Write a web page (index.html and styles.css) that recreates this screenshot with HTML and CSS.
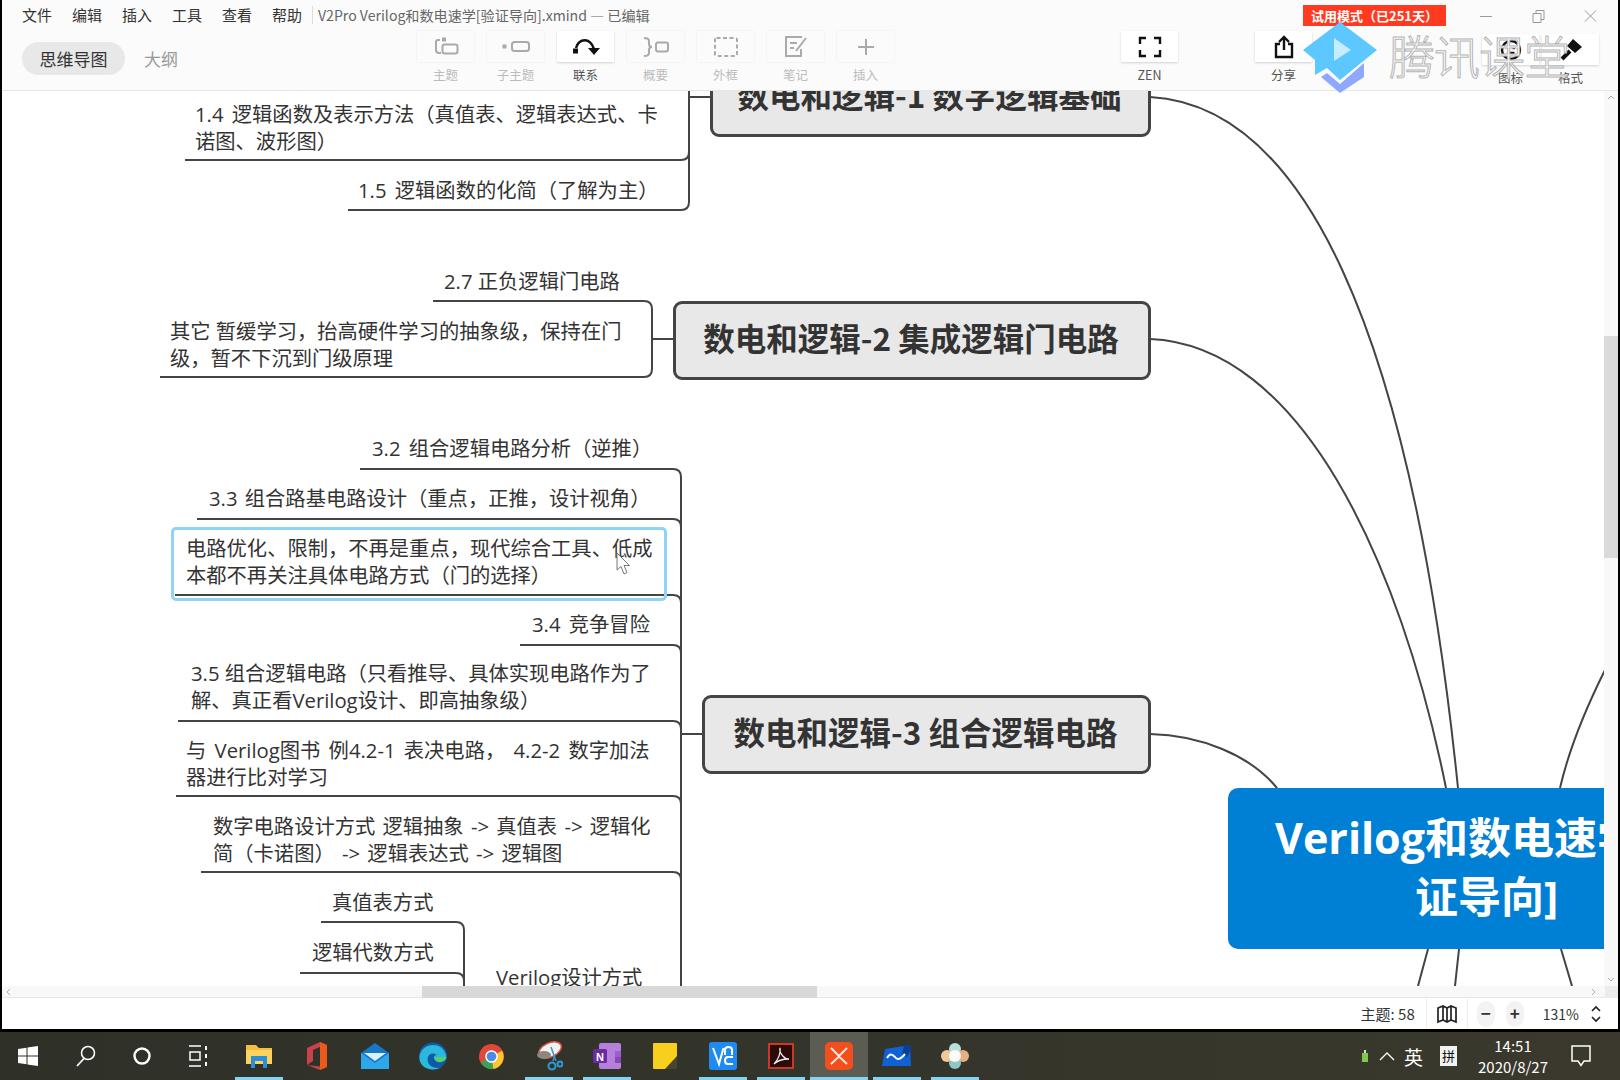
FILE: index.html
```html
<!DOCTYPE html>
<html lang="zh">
<head>
<meta charset="utf-8">
<title>XMind</title>
<link rel="stylesheet" href="styles.css">
</head>
<body>
<div class="window">
  <header class="header">
    <div class="menubar">
      <nav class="menu"><span>文件</span><span>编辑</span><span>插入</span><span>工具</span><span>查看</span><span>帮助</span></nav>
      <div class="doc-title">V2Pro Verilog和数电速学[验证导向].xmind — 已编辑</div>
      <div class="trial">试用模式（已251天）</div>
      <div class="winctl">
        <svg width="52" height="16" viewBox="0 0 52 16"><path d="M20 8.500H32" class="wc"/></svg>
        <svg width="52" height="16" viewBox="0 0 52 16"><path d="M21 5.500H29V14.500H21ZM24 5.500V2.500H32V11.500H29" class="wc"/></svg>
        <svg width="52" height="16" viewBox="0 0 52 16"><path d="M21 2.500L32 13.500M32 2.500L21 13.500" class="wc"/></svg>
      </div>
    </div>
    <div class="toolrow">
      <div class="tabs"><span class="tab on">思维导图</span><span class="tab">大纲</span></div>
      <div class="tools">
        <div class="tool off"><div class="tbtn"><svg width="26" height="22" viewBox="0 0 26 22"><rect x="9" y="1.500" width="4" height="4" class="tf"/><path d="M7 4H5Q3 4 3 6V14Q3 17 6 17H8" class="ti"/><rect x="9.500" y="8.500" width="15" height="9" rx="2" class="ti"/></svg></div><label>主题</label></div>
        <div class="tool off"><div class="tbtn"><svg width="28" height="22" viewBox="0 0 28 22"><rect x="0.500" y="8.500" width="4" height="4" class="tf"/><rect x="10" y="6" width="17" height="9" rx="2.500" class="ti"/></svg></div><label>子主题</label></div>
        <div class="tool on"><div class="tbtn"><svg width="28" height="22" viewBox="0 0 28 22"><path d="M4 12C7 2 18 1 22 13" class="tk"/><rect x="1" y="12.500" width="5" height="5" class="tkf"/><path d="M16 12H28L22 19Z" class="tkf"/></svg></div><label>联系</label></div>
        <div class="tool off"><div class="tbtn"><svg width="28" height="22" viewBox="0 0 28 22"><path d="M2 2Q7 2 7 5V8Q7 11 10 11Q7 11 7 14V17Q7 20 2 20" class="ti"/><rect x="14" y="6.500" width="12" height="9" rx="2" class="ti"/></svg></div><label>概要</label></div>
        <div class="tool off"><div class="tbtn"><svg width="26" height="22" viewBox="0 0 26 22"><rect x="2" y="2" width="22" height="18" rx="1.500" class="ti dash"/></svg></div><label>外框</label></div>
        <div class="tool off"><div class="tbtn"><svg width="26" height="24" viewBox="0 0 26 24"><path d="M19 2H3V21H18V14" class="ti"/><path d="M7 8H14M7 13H11M23 3L13 16" class="ti"/></svg></div><label>笔记</label></div>
        <div class="tool off"><div class="tbtn"><svg width="20" height="20" viewBox="0 0 20 20"><path d="M10 2V18M2 10H18" class="ti"/></svg></div><label>插入</label></div>
      </div>
      <div class="tool on zen"><div class="tbtn"><svg width="24" height="22" viewBox="0 0 24 22"><path d="M2 8V2H8M16 2H22V8M2 14V20H8M16 20H22V14" class="tk"/></svg></div><label>ZEN</label></div>
      <div class="tool on share"><div class="tbtn"><svg width="22" height="24" viewBox="0 0 22 24"><path d="M7 9H3V22H19V9H15M11 15V2M6 7L11 2L16 7" class="tk"/></svg></div><label>分享</label></div>
      <div class="tool on lower"><div class="tbtn"><svg width="24" height="24" viewBox="0 0 24 24"><circle cx="12" cy="12" r="9" class="tk"/><path d="M8 10H10.500M13.500 10H16M8.500 15H15.500" class="tk"/></svg></div><label>图标</label></div>
      <div class="tool on lower"><div class="tbtn"><svg width="24" height="24" viewBox="0 0 24 24"><path d="M14 1L23 9L16 15L8 8Z" class="tkf"/><path d="M11 13L3 21" class="tkb"/></svg></div><label>格式</label></div>
    </div>
    <div class="brand">
      <svg width="82" height="76" viewBox="0 0 82 76"><path d="M22 57L41 73L65 57V43L41 64L28 53Z" fill="#8fa8ff"/><path d="M4 30L41 2L78 30L41 60L28 48L16 55V40Z" fill="#5cc8ff"/><path d="M35 18L52 30L35 41Z" fill="#c6ecff"/></svg>
      <span class="brand-text">腾讯课堂</span>
    </div>
  </header>

  <main class="canvas">
    <div class="map">
      <svg class="links" width="1620" height="1080" viewBox="0 0 1620 1080">
        <path d="M689 91V202Q689 210 681 210H348M185 160H681Q689 160 689 152M689 97H711"/>
        <path d="M433 301H644Q652 301 652 309V369Q652 377 644 377H160M652 339H674"/>
        <path d="M360 469H673Q681 469 681 477V990M197 519H673Q681 519 681 527M175 595H673Q681 595 681 603M520 645H673Q681 645 681 653M178 721H673Q681 721 681 729M176 796H673Q681 796 681 804M201 872H673Q681 872 681 880M681 734H703"/>
        <path d="M321 922H456Q464 922 464 930V990M300 973H456Q464 973 464 981"/>
        <path d="M1150 97C1300 105 1410 320 1458 788"/>
        <path d="M1150 339C1300 345 1400 560 1446 788"/>
        <path d="M1150 734C1200 735 1250 755 1277 788"/>
        <path d="M1560 788C1570 745 1590 700 1605 670"/>
        <path d="M1428 949L1418 986M1459 949L1455 986M1561 949L1572 986"/>
      </svg>

      <div class="branch b1"><span>数电和逻辑-1 数字逻辑基础</span></div>
      <div class="branch b2"><span>数电和逻辑-2 集成逻辑门电路</span></div>
      <div class="branch b3"><span>数电和逻辑-3 组合逻辑电路</span></div>

      <div class="topic t14">1.4 逻辑函数及表示方法（真值表、逻辑表达式、卡<br>诺图、波形图）</div>
      <div class="topic t15">1.5 逻辑函数的化简（了解为主）</div>
      <div class="topic t27">2.7 正负逻辑门电路</div>
      <div class="topic t2x">其它 暂缓学习，抬高硬件学习的抽象级，保持在门<br>级，暂不下沉到门级原理</div>
      <div class="topic t32">3.2 组合逻辑电路分析（逆推）</div>
      <div class="topic t33">3.3 组合路基电路设计（重点，正推，设计视角）</div>
      <div class="selected"></div>
      <div class="topic t3s">电路优化、限制，不再是重点，现代综合工具、低成<br>本都不再关注具体电路方式（门的选择）</div>
      <div class="topic t34">3.4 竞争冒险</div>
      <div class="topic t35">3.5 组合逻辑电路（只看推导、具体实现电路作为了<br>解、真正看Verilog设计、即高抽象级）</div>
      <div class="topic t36">与 Verilog图书 例4.2-1 表决电路， 4.2-2 数字加法<br>器进行比对学习</div>
      <div class="topic t37">数字电路设计方式 逻辑抽象 -&gt; 真值表 -&gt; 逻辑化<br>简（卡诺图） -&gt; 逻辑表达式 -&gt; 逻辑图</div>
      <div class="topic t38">真值表方式</div>
      <div class="topic t39">逻辑代数方式</div>
      <div class="topic t3v">Verilog设计方式</div>

      <div class="central">
        <div class="c1">Verilog和数电速学[验</div>
        <div class="c2">证导向]</div>
      </div>
      <svg class="cursor" width="16" height="24" viewBox="0 0 16 24"><path d="M1 1V18L5 14.500L8 22L11 20.500L8 13.500H13.500Z" fill="#fff" stroke="#777" stroke-width="1"/></svg>
    </div>
    <div class="vscroll">
      <svg class="va" width="12" height="12" viewBox="0 0 12 12"><path d="M3 8L6 5L9 8"/></svg>
      <div class="vtrack"><div class="vthumb"></div></div>
      <svg class="va" width="12" height="12" viewBox="0 0 12 12"><path d="M3 4L6 7L9 4"/></svg>
    </div>
  </main>

  <div class="hscroll">
    <svg class="va" width="12" height="12" viewBox="0 0 12 12"><path d="M8 3L5 6L8 9"/></svg>
    <div class="hthumb"></div>
    <svg class="va right" width="12" height="12" viewBox="0 0 12 12"><path d="M4 3L7 6L4 9"/></svg>
    <div class="corner"></div>
  </div>

  <footer class="status">
    <span class="count">主题: 58</span>
    <span class="mapbtn"><svg width="22" height="20" viewBox="0 0 22 20"><path d="M2 4L7 2L11 4L15 2L20 4V18L15 16L11 18L7 16L2 18ZM7 2V16M11 4V18M15 2V16" class="sb"/></svg></span>
    <span class="zb">−</span><span class="zb">+</span>
    <span class="pct">131%</span>
    <svg width="12" height="20" viewBox="0 0 12 20"><path d="M2 7L6 3L10 7M2 13L6 17L10 13" class="sb"/></svg>
  </footer>
</div>

<div class="taskbar">
  <div class="sys">
    <span class="sl"><svg width="20" height="20" viewBox="0 0 20 20"><path d="M0 3L8.500 1.800V9.400H0ZM9.500 1.600L20 0V9.400H9.500ZM0 10.500H8.500V18.200L0 17ZM9.500 10.500H20V20L9.500 18.400Z" fill="#fff"/></svg></span>
    <span class="sl"><svg width="22" height="24" viewBox="0 0 22 24"><circle cx="13" cy="9" r="6.500" fill="none" stroke="#fff" stroke-width="1.600"/><path d="M9 14.500L2 22" stroke="#fff" stroke-width="1.800"/></svg></span>
    <span class="sl"><svg width="20" height="20" viewBox="0 0 20 20"><circle cx="10" cy="10" r="7.500" fill="none" stroke="#fff" stroke-width="2.400"/></svg></span>
    <span class="sl"><svg width="22" height="24" viewBox="0 0 22 24"><path d="M2 2H14M2 22H14M3 8H13V16H3Z" fill="none" stroke="#fff" stroke-width="1.500"/><path d="M19 2V6M19 18V22M19 10V14" stroke="#fff" stroke-width="2"/></svg></span>
  </div>
  <div class="apps">
    <span class="ap run"><svg width="26" height="24" viewBox="0 0 26 24"><path d="M0 1H10L13 4H26V20H0Z" fill="#f3bd3e"/><rect x="0" y="6" width="26" height="14" fill="#fbd25e"/><path d="M5 12H21V24H17V17H9V24H5Z" fill="#2a8fd8"/></svg></span>
    <span class="ap"><svg width="22" height="28" viewBox="0 0 22 28"><path d="M1 6L14 0L21 3V25L14 28L1 23L14 24.500V5L7 8V19L1 23Z" fill="#c9414a"/><path d="M14 5V24.500L14 28L21 25V3L14 0Z" fill="#ea5a1a"/></svg></span>
    <span class="ap"><svg width="30" height="28" viewBox="0 0 30 28"><path d="M1 11L15 1L29 11V27H1Z" fill="#1677c8"/><path d="M1 11L15 21L29 11V27H1Z" fill="#2ea6ea"/><path d="M4 11H26L15 19Z" fill="#d8f0fb"/></svg></span>
    <span class="ap"><svg width="30" height="28" viewBox="0 0 30 28"><ellipse cx="15" cy="14" rx="14" ry="13.500" fill="#0f5aa8"/><path d="M2 12C6 1 24 -1 28 13C29 19 22 21 18 19C15 17 15 13 19 13C14 9 8 13 10 20C12 26 20 27 24 25C18 29 8 28 4 23C1 19 1 15 2 12Z" fill="#2bb8dc"/><path d="M16 15H28.500C28 19 22 22 18 19Z" fill="#52cf72"/></svg></span>
    <span class="ap"><svg width="27" height="27" viewBox="0 0 28 28"><circle cx="14" cy="14" r="13" fill="#e2483a"/><path d="M14 14L3 20A13 13 0 0 0 16 27Z" fill="#37a355"/><path d="M14 14L25 8A13 13 0 0 1 16 27Z" fill="#fbc62e"/><circle cx="14" cy="14" r="6.500" fill="#fff"/><circle cx="14" cy="14" r="5" fill="#4a8be8"/></svg></span>
    <span class="ap run"><svg width="28" height="30" viewBox="0 0 28 30"><ellipse cx="15" cy="9" rx="12" ry="7" transform="rotate(-25 15 9)" fill="#f2f2ee" stroke="#d9534a" stroke-width="1.500"/><ellipse cx="9" cy="14" rx="7" ry="4" fill="#8d867c"/><path d="M16 6L21 20M20 14L18 20" stroke="#2b9ad8" stroke-width="1.500"/><circle cx="17" cy="25" r="3.500" fill="none" stroke="#2b9ad8" stroke-width="2"/><circle cx="25" cy="23" r="2.500" fill="none" stroke="#2b9ad8" stroke-width="2"/></svg></span>
    <span class="ap run"><svg width="28" height="26" viewBox="0 0 28 26"><rect x="6" y="0" width="22" height="26" rx="2" fill="#b57fdc"/><rect x="22" y="8" width="6" height="6" fill="#9a5fc8"/><rect x="22" y="14" width="6" height="6" fill="#8748b8"/><rect x="0" y="6" width="14" height="14" rx="1.500" fill="#6b2aa0"/><text x="7" y="17.500" class="onote">N</text></svg></span>
    <span class="ap"><svg width="24" height="26" viewBox="0 0 24 26"><rect x="0" y="0" width="24" height="26" rx="1" fill="#f9cf1d"/><path d="M24 13V26H12Z" fill="#4a4530"/></svg></span>
    <span class="ap run"><svg width="28" height="28" viewBox="0 0 28 28"><rect x="0" y="0" width="28" height="28" rx="3" fill="#1f8bf2"/><path d="M4 6L10 22L14.500 6M16 13V8Q16 5 19.500 5Q23 5 23 8V13M24 15H19Q16 15 16 18.500Q16 22 19 22H24" fill="none" stroke="#fff" stroke-width="2"/></svg></span>
    <span class="ap run"><svg width="26" height="26" viewBox="0 0 26 26"><rect x="1" y="1" width="24" height="24" fill="#2b0a08" stroke="#c93a24" stroke-width="2"/><path d="M6 21C10 17 13 10 12 5C11 10 16 16 21 16C16 16 10 17 6 21Z" fill="none" stroke="#eee" stroke-width="1.300"/></svg></span>
    <span class="ap run act"><svg width="28" height="28" viewBox="0 0 28 28"><rect x="0" y="0" width="28" height="28" rx="5" fill="#f24f1d"/><path d="M6 6L14 14L22 6M6 22L14 14.500L22 22" fill="none" stroke="#ffe6dc" stroke-width="2"/></svg></span>
    <span class="ap run"><svg width="30" height="22" viewBox="0 0 30 22"><path d="M3 4L28 0L29 21H0Z" fill="#0f62d6"/><path d="M22 0H29V4L25 12L20 10Z" fill="#0a3f96"/><path d="M5 13C8 8 10 9 13 12C15 15 18 15 23 9" fill="none" stroke="#fff" stroke-width="2"/></svg></span>
    <span class="ap run"><svg width="28" height="26" viewBox="0 0 28 26"><circle cx="14" cy="6" r="6" fill="#b8e0d8"/><circle cx="14" cy="20" r="6" fill="#8cc8c4"/><circle cx="6" cy="13" r="6" fill="#f0c89a"/><circle cx="22" cy="13" r="6" fill="#e6b080"/><circle cx="14" cy="13" r="6" fill="#fafafa"/></svg></span>
  </div>
  <div class="tray">
    <svg class="usb" width="6" height="12" viewBox="0 0 6 12"><rect x="0" y="3" width="6" height="9" fill="#7ec850"/><rect x="2" y="0" width="2" height="3" fill="#ddd"/></svg>
    <svg class="caret" width="16" height="10" viewBox="0 0 16 10"><path d="M1 9L8 2L15 9" fill="none" stroke="#fff" stroke-width="1.300"/></svg>
    <span class="ime">英</span>
    <span class="pin">拼</span>
    <div class="clock"><div>14:51</div><div>2020/8/27</div></div>
    <svg class="notif" width="20" height="22" viewBox="0 0 20 22"><path d="M1 1H19V16H13L10 20.500L7 16H1Z" fill="none" stroke="#fff" stroke-width="1.500"/></svg>
  </div>
</div>
</body>
</html>
```

FILE: styles.css
```css
* { box-sizing: border-box; }
html, body { margin: 0; padding: 0; width: 1620px; height: 1080px; overflow: hidden; }
body {
  background: #000;
  font-family: "Noto Sans CJK SC", "Lato", sans-serif;
  color: #333;
  display: flex;
  flex-direction: column;
}
.window {
  height: 1029px;
  margin: 0 2px;
  background: #fff;
  display: flex;
  flex-direction: column;
  position: relative;
}
.header {
  height: 91px;
  flex: none;
  background: #fbfbfb;
  border-bottom: 1px solid #e6e6e6;
  position: relative;
  z-index: 2;
}
.menubar { height: 31px; display: flex; align-items: center; padding-left: 20px; }
.menu { display: flex; gap: 20px; font-size: 15px; color: #333; width: 290px; margin-top: -2px; }
.doc-title { font-size: 14.1px; color: #666; border-left: 1px solid #ddd; padding-left: 5px; line-height: 18px; width: 991px; white-space: nowrap; margin-top: -2px; }
.trial {
  width: 143px; height: 21px; background: #ff3a20; color: #fff;
  font-size: 13px; font-weight: 700; line-height: 21px; text-align: center; white-space: nowrap;
}
.winctl { display: flex; margin-left: 14px; }
.wc { fill: none; stroke: #999; stroke-width: 1; }
.toolrow { height: 59px; display: flex; align-items: flex-start; padding-left: 20px; }
.tabs { display: flex; align-items: center; width: 395px; padding-top: 11px; }
.tab { height: 33px; line-height: 33px; padding: 0 19px; font-size: 17px; color: #999; border-radius: 17px; }
.tab.on { width: 103px; padding: 0; text-align: center; background: #e8e8e8; color: #333; }
.tools { display: flex; gap: 13px; }
.tool { width: 57px; display: flex; flex-direction: column; align-items: center; }
.tbtn {
  width: 57px; height: 31px; display: flex; align-items: center; justify-content: center;
  background: #fbfbfb; box-shadow: 0 0 2px rgba(0,0,0,.08);
}
.tool.on .tbtn { background: #fff; box-shadow: 0 1px 2px rgba(0,0,0,.16); }
.tool label { font-size: 12.5px; line-height: 18px; margin-top: 4px; color: #bbb; white-space: nowrap; }
.tool.on label { color: #555; }
.zen { margin-left: 227px; }
.share { margin-left: 77px; }
.lower { margin-left: 3px; margin-top: 3px; }
.tool.lower + .tool.lower { margin-left: 3px; }
.share + .lower { margin-left: 170px; }
.ti { fill: none; stroke: #aaa; stroke-width: 2; }
.tf { fill: #aaa; }
.dash { stroke-dasharray: 4 2.500; }
.tk { fill: none; stroke: #111; stroke-width: 2.400; }
.tkf { fill: #111; }
.tkb { fill: none; stroke: #111; stroke-width: 4; }
.brand { position: absolute; left: 1297px; top: 20px; display: flex; align-items: flex-start; pointer-events: none; }
.brand-text {
  font-size: 46px; line-height: 54px; font-weight: 300; color: #fff; margin: 7px 0 0 8px; letter-spacing: -1px;
  -webkit-text-stroke: 1px #b4b4b4; white-space: nowrap;
}

.canvas { height: 895px; flex: none; position: relative; overflow: hidden; }
.map { position: absolute; left: -2px; top: -91px; width: 1620px; height: 1080px; }
.links { position: absolute; left: 0; top: 0; }
.links path { fill: none; stroke: #444; stroke-width: 2; }

.branch {
  position: absolute;
  background: #e8e8e8; border: 3px solid #444; border-radius: 9px;
  display: flex; align-items: center; justify-content: center; padding: 0 2px 7px 0;
  font-size: 31.5px; font-weight: 700; color: #333; white-space: nowrap;
}
.b1 { left: 710px; width: 441px; top: 58px; height: 79px; }
.b2 { left: 673px; width: 478px; top: 301px; height: 79px; }
.b3 { left: 702px; width: 449px; top: 695px; height: 79px; }

.topic { position: absolute; font-size: 20.3px; line-height: 27px; color: #333; white-space: nowrap; font-family: "Open Sans", "Noto Sans CJK SC", sans-serif; }
.t14 { left: 195px; top: 101px; word-spacing: 3px; }
.t15 { left: 358px; top: 177px; word-spacing: 3px; }
.t27 { left: 444px; top: 268px; }
.t2x { left: 170px; top: 318px; }
.t32 { left: 372px; top: 435px; word-spacing: 3px; }
.t33 { left: 209px; top: 485px; word-spacing: 2px; }
.t3s { left: 186px; top: 535px; }
.t34 { left: 532px; top: 611px; word-spacing: 3px; }
.t35 { left: 191px; top: 660px; }
.t36 { left: 186px; top: 737px; word-spacing: 3px; }
.t37 { left: 213px; top: 813px; word-spacing: 2px; }
.t38 { left: 332px; top: 889px; }
.t39 { left: 312px; top: 939px; }
.t3v { left: 496px; top: 964px; }
.selected {
  position: absolute; left: 171px; top: 527px; width: 496px; height: 74px;
  border: 3px solid #8fd4f6; border-radius: 5px;
}
.central {
  position: absolute; left: 1228px; top: 788px; width: 500px; height: 161px;
  background: #0080d4; border-radius: 10px; color: #fff; font-weight: 700; font-size: 43px;
  font-family: "Open Sans", "Noto Sans CJK SC", sans-serif; white-space: nowrap;
}
.c1 { position: absolute; left: 47px; top: 22px; line-height: 56px; }
.c2 { position: absolute; left: 187px; top: 81px; line-height: 56px; }
.cursor { position: absolute; left: 616px; top: 552px; }

.vscroll {
  position: absolute; right: 0; top: 0; bottom: 0; width: 14px; background: #f8f8f8;
  display: flex; flex-direction: column; align-items: center;
}
.vtrack { flex: 1; width: 100%; padding-top: 233px; }
.vthumb { height: 222px; background: #dadada; }
.va { flex: none; }
.va path { fill: none; stroke: #aaa; stroke-width: 1; }
.hscroll {
  height: 12px; flex: none; background: #f8f8f8; display: flex; align-items: center; border-bottom: 1px solid #e8e8e8;
}
.hthumb { width: 395px; height: 12px; background: #d8d8d8; margin-left: 408px; }
.va.right { margin-left: auto; margin-right: 5px; }
.corner { width: 13px; height: 12px; background: #ececec; }

.status {
  height: 31px; flex: none; display: flex; align-items: center; justify-content: flex-end;
  padding-right: 16px; background: #fff; font-size: 15px; color: #333;
}
.count { margin-right: 11px; }
.mapbtn {
  width: 42px; height: 31px; display: flex; align-items: center; justify-content: center;
  border-left: 1px solid #eee; border-right: 1px solid #eee; margin-right: 9px;
}
.sb { fill: none; stroke: #222; stroke-width: 1.700; }
.zb {
  width: 18px; height: 26px; line-height: 24px; border-radius: 9px; background: #f3f3f3;
  text-align: center; font-size: 17px; font-weight: 700; margin-right: 11px;
}
.pct { margin: 0 11px 0 8px; font-size: 14px; }

.taskbar {
  height: 48px; margin-top: 3px; flex: none; display: flex; align-items: stretch;
  background: linear-gradient(90deg, #2f3027, #33342a 50%, #3b392d);
  color: #fff; position: relative;
}
.sys { display: flex; width: 230px; }
.sl { width: 56px; display: flex; align-items: center; justify-content: center; }
.sl + .sl { transform: translateX(2px); }
.apps { display: flex; }
.ap { width: 58px; display: flex; align-items: center; justify-content: center; position: relative; }
.ap.run::after {
  content: ""; position: absolute; left: 5px; right: 5px; bottom: 0; height: 3px; background: #7fd4f8;
}
.ap.act { background: #5c5c52; }
.ap.act::after { left: 0; right: 0; }
.onote { font: 700 11px "Liberation Sans", sans-serif; fill: #fff; text-anchor: middle; }
.tray { flex: 1; display: flex; align-items: center; padding-left: 378px; }
.caret { margin-left: 11px; }
.ime { font-size: 19px; margin-left: 9px; }
.pin { margin-left: 17px; width: 17px; height: 20px; background: #f2f2f2; color: #111; font-size: 13px; line-height: 20px; text-align: center; }
.clock { width: 90px; margin-left: 11px; text-align: center; font-size: 15px; line-height: 21px; }
.notif { margin-left: 13px; }
```
